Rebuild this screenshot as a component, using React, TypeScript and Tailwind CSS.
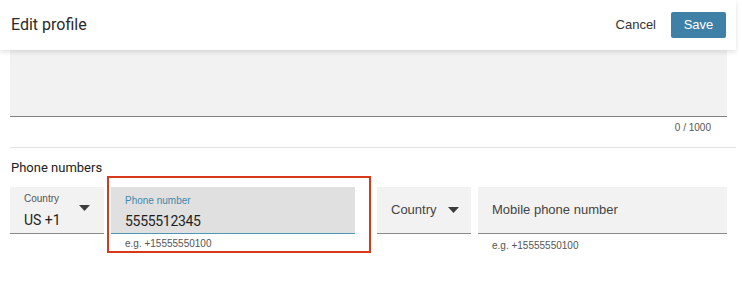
import React from 'react';

const ember = { fontFamily: 'Roboto, "Noto Sans", sans-serif' };
const helv = { fontFamily: '"Liberation Sans", Arial, sans-serif' };

function Caret() {
  return (
    <svg width="11" height="6" viewBox="0 0 11 6" className="shrink-0">
      <path d="M0 0 L11 0 L5.5 6 Z" fill="#3c3c3c" />
    </svg>
  );
}

export default function App() {
  return (
    <div className="w-[742px] h-[284px] bg-white overflow-hidden relative">
      <div className="relative z-10 h-[50px] bg-white flex items-center justify-between pl-[11px] pr-[10px] shadow-[0_2px_5px_rgba(0,0,0,0.12)] w-[736px]">
        <span className="text-[16px] text-[#2a2a2a] font-normal" style={ember}>
          Edit profile
        </span>
        <div className="flex items-center gap-[15px]" style={helv}>
          <button className="text-[13px] text-[#333]">Cancel</button>
          <button className="h-[26px] w-[55px] rounded-[2px] bg-[#3f80a6] text-white text-[13px]">Save</button>
        </div>
      </div>

      <div className="pl-[10px] pr-[15px]">
        <div className="h-[67px] bg-[#f2f2f2] border-b border-[#7f7f7f] w-[717px]" />
        <div className="flex justify-end pr-[16px] pt-[3px] h-[30px] text-[10px] text-[#555]" style={helv}>
          0 / 1000
        </div>
        <div className="border-t border-[#e4e4e4] w-[726px]" />

        <div className="pt-[11px] pl-[1px] text-[13px] leading-[17px] text-[#222]" style={ember}>
          Phone numbers
        </div>

        <div className="flex mt-0 h-[77px]">
          <div className="w-[94px] pt-[11px]">
            <div className="h-[47px] bg-[#f2f2f2] border-b border-[#8a8a8a] flex items-center justify-between pl-[14px] pr-[14px]">
              <div className="flex flex-col pt-[3px]">
                <span className="text-[10px] leading-[12px] text-[#555]" style={helv}>Country</span>
                <span className="text-[14px] leading-[20px] mt-[5px] text-[#1f1f1f]" style={ember}>US +1</span>
              </div>
              <div className="-mt-[4px]"><Caret /></div>
            </div>
          </div>

          <div className="ml-[3px] w-[264px] border-2 border-[#d8391a] pt-[9px] pl-[2px] pr-[14px]">
            <div className="h-[47px] bg-[#e0e0e0] border-b border-[#4a9ab5] flex flex-col pl-[14px] pt-[8px]">
              <span className="text-[10px] leading-[12px] text-[#3f88aa]" style={helv}>Phone number</span>
              <span className="text-[14px] leading-[20px] mt-[4px] text-[#1f1f1f] tracking-[-0.3px]" style={ember}>5555512345</span>
            </div>
            <div className="pl-[14px] pt-[2px] text-[10px] text-[#555]" style={helv}>e.g. +15555550100</div>
          </div>

          <div className="ml-[6px] w-[94px] pt-[11px]">
            <div className="h-[47px] bg-[#f2f2f2] border-b border-[#8a8a8a] flex items-center pl-[14px] gap-[11px]">
              <span className="text-[13px] text-[#444]" style={helv}>Country</span>
              <Caret />
            </div>
          </div>

          <div className="ml-[7px] w-[249px] pt-[11px]">
            <div className="h-[47px] bg-[#f2f2f2] border-b border-[#8a8a8a] flex items-center pl-[14px]">
              <span className="text-[13px] text-[#444]" style={helv}>Mobile phone number</span>
            </div>
            <div className="pl-[14px] pt-[4px] text-[10px] text-[#555]" style={helv}>e.g. +15555550100</div>
          </div>
        </div>
      </div>
    </div>
  );
}
